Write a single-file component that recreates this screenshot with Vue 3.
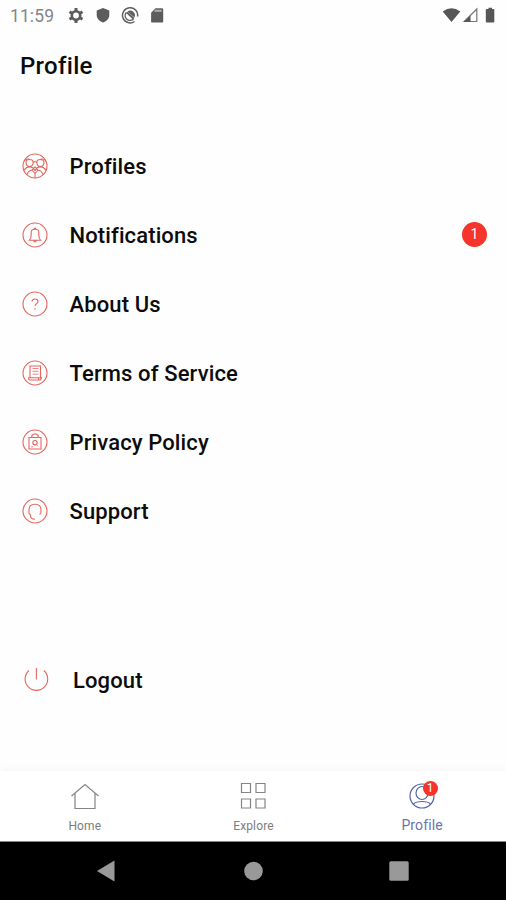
<script setup>
import { ref } from 'vue'

const items = [
    { id: 'profiles', label: 'Profiles' },
    { id: 'notifications', label: 'Notifications', badge: 1 },
    { id: 'about', label: 'About Us' },
    { id: 'terms', label: 'Terms of Service' },
    { id: 'privacy', label: 'Privacy Policy' },
    { id: 'support', label: 'Support' },
]
const tab = ref('profile')
</script>

<template>
    <div class="screen">
        <header class="status">
            <span class="time">11:59</span>
            <svg class="status-left" width="98" height="18" viewBox="0 0 98 18">
                <g fill="none" stroke="#5c5c5c">
                    <circle cx="9" cy="8.500" r="4.200" stroke-width="2.600" />
                    <path d="M9 1v3M9 13v3M2.500 4.800l2.600 1.500M12.900 10.700l2.600 1.500M2.500 12.200l2.600-1.500M12.900 6.300l2.600-1.500" stroke-width="3" />
                </g>
                <path d="M36 1l6.300 2.500v4.400c0 3.400-2.500 6.200-6.300 7.700-3.800-1.500-6.300-4.300-6.300-7.700V3.500z" fill="#5c5c5c" />
                <g fill="none" stroke="#606060" stroke-width="1.500">
                    <path d="M67.500 14.500A7.600 7.600 0 1 1 70.600 9.500" />
                    <path d="M59.500 5.300a4.800 4.800 0 1 0 7.300 6.200" stroke-width="1.300" />
                    <path d="M60.500 4.500a4.800 4.800 0 0 1 7 6z" fill="#606060" stroke="none" />
                    <path d="M60 5.500l6.500 6" stroke-width="2" />
                </g>
                <path d="M88.500 1.200H95q1.200 0 1.200 1.200v12q0 1.200-1.200 1.200H85.300q-1.200 0-1.200-1.200V5.700z" fill="#5c5c5c" />
                <path d="M87.500 3.800h7.200" stroke="#aaa" stroke-width="2.200" />
            </svg>
            <svg class="status-right" width="56" height="18" viewBox="0 0 56 18">
                <path d="M0.700 4.500Q9.500-2 18.300 4.500L9.500 15z" fill="#565656" />
                <path d="M34.800 2V14.500H22.300z" fill="#fff" stroke="#777" stroke-width="1.200" />
                <path d="M28.500 8.500v6.500h-7z" fill="#565656" />
                <path d="M46.500 2v-1.300h3.500v1.300h1.300q1 0 1 1V14.500q0 1-1 1h-6.500q-1 0-1-1V3q0-1 1-1z" fill="#565656" />
            </svg>
        </header>

        <h1>Profile</h1>

        <ul class="menu">
            <li v-for="item in items" :key="item.id">
                <svg class="icon" width="26" height="26" viewBox="0 0 26 26">
                    <circle cx="13" cy="13" r="12" />
                    <g v-if="item.id === 'profiles'">
                        <path d="M4 9.200q0-2.700 3.500-2.700t3.700 2.700q0 4.200-3.600 4.400Q4 13.400 4 9.200zM14.800 9.200q0-2.700 3.500-2.700T22 9.200q0 4.200-3.600 4.400-3.600-.2-3.600-4.400z" />
                        <path d="M1.800 8.500Q4 5 7.500 6.300M18.500 6.300Q22 5 24.200 8.500M11 9.500l2-1 2 1" />
                        <path d="M2 17.500q2-3.500 5.600-3.900Q11 14 13 17.500q2-3.500 5.400-3.900Q22 14 24 17.500M5 21.500q1.500-3.800 5-4.500l3 3.500 3-3.500q3.500.7 5 4.500M13 20.500V25M10 17l3-3 3 3" />
                    </g>
                    <g v-else-if="item.id === 'notifications'">
                        <path d="M7.300 18.300c1.400-1.200 1.900-2.800 1.900-5.300V10q0-2.800 3.800-2.800T16.800 10v3c0 2.500.5 4.100 1.900 5.300zM11.500 18.500q1.500 2.800 3 0M12 7q1-2 2 0" />
                    </g>
                    <g v-else-if="item.id === 'about'">
                        <path d="M10 10.600q.1-2.600 3-2.600 3 0 3 2.400 0 1.300-1.500 2.300-1.500.9-1.500 2.400M13 17v1.400" />
                    </g>
                    <g v-else-if="item.id === 'terms'">
                        <path d="M8 18V6h10.500v12.500" />
                        <path d="M6.500 17.800h10v2.200H7.800q-1.300 0-1.300-2.200zM16.500 20q3 .2 3-2.200h-3" />
                        <path d="M10.500 8.500h6M10.500 11.300h6M10.500 14.100h6" stroke-width=".8" />
                    </g>
                    <g v-else-if="item.id === 'privacy'">
                        <path d="M7 8.500h12v11.500H7zM9.800 8.500V7.300Q9.800 5 13 5t3.200 2.300v1.200" />
                        <circle cx="13" cy="13.700" r="2.200" />
                        <path d="M14.500 15.500l1.800 1.500M9 17.800h2" stroke-width=".7" />
                    </g>
                    <g v-else>
                        <path d="M8.500 16.500Q7 16.500 7 14.500V12Q7 6.300 13 6.300T19 12v2.500q0 1.800-1.600 1.800M8.500 16.500V18q0 3 4.500 3.200" />
                    </g>
                </svg>
                <span class="label">{{ item.label }}</span>
                <span v-if="item.badge" class="badge">{{ item.badge }}</span>
            </li>
        </ul>

        <div class="logout">
            <svg class="icon" width="26" height="26" viewBox="0 0 26 26">
                <path d="M6 3.500A11.300 11.300 0 1 0 20.800 3.500M13.400 1v11.500" />
            </svg>
            <span class="label">Logout</span>
        </div>

        <nav class="tabs">
            <button @click="tab = 'home'" :class="{ active: tab === 'home' }">
                <svg width="30" height="30" viewBox="0 0 30 30">
                    <path d="M1.500 14L15 2.500 28.500 14M5 11.500V26.500H25V11.500" />
                </svg>
                <span>Home</span>
            </button>
            <button @click="tab = 'explore'" :class="{ active: tab === 'explore' }">
                <svg width="30" height="30" viewBox="0 0 30 30">
                    <path d="M3.500 1.500h9v9h-9zM18 1.500h9v9H18zM3.500 17h9v9h-9zM18 17h9v9H18z" />
                </svg>
                <span>Explore</span>
            </button>
            <button @click="tab = 'profile'" :class="{ active: tab === 'profile' }">
                <svg width="30" height="30" viewBox="0 0 30 30">
                    <circle cx="15" cy="14" r="12" />
                    <ellipse cx="15" cy="11" rx="6" ry="6.500" />
                    <path d="M6.500 22Q9 19.500 15 19.500T23.500 22" />
                </svg>
                <i class="dot">1</i>
                <span>Profile</span>
            </button>
        </nav>

        <footer class="system">
            <svg width="20" height="24" viewBox="0 0 20 24"><path d="M1 12L18.500 1.500v21z" /></svg>
            <svg width="20" height="24" viewBox="0 0 20 24"><circle cx="10.500" cy="12" r="9.300" /></svg>
            <svg width="20" height="24" viewBox="0 0 20 24"><rect x=".3" y="2.300" width="19.400" height="19.400" rx="1.500" /></svg>
        </footer>
    </div>
</template>

<style>
body {
    margin: 0;
    background: #fff;
}
</style>

<style scoped>
.screen {
    display: flex;
    flex-direction: column;
    width: 506px;
    height: 900px;
    overflow: hidden;
    background: #fefefe;
    color: #0c0c0c;
    font-family: Roboto, "Liberation Sans", sans-serif;
}

.status {
    display: flex;
    align-items: center;
    height: 32px;
    padding: 0 8px 0 10px;
}

.time {
    width: 57px;
    font-size: 17.5px;
    letter-spacing: 0.1px;
    color: #858585;
}

.status-right {
    margin-left: auto;
}

h1 {
    margin: 18px 0 0 20px;
    font-size: 24px;
    line-height: 32px;
    font-weight: 500;
    letter-spacing: 0.3px;
}

.menu {
    margin: 49px 0 0;
    padding: 0;
    list-style: none;
}

.menu li,
.logout {
    display: flex;
    align-items: center;
    height: 69px;
    padding: 0 19px 0 22px;
}

.icon {
    fill: none;
    stroke: #e3675d;
    stroke-width: 1.1;
}

.label {
    margin-left: 21.5px;
    padding-top: 1px;
    font-size: 22px;
    font-weight: 500;
    letter-spacing: 0.12px;
}

.badge {
    width: 25px;
    height: 25px;
    margin-left: auto;
    border-radius: 50%;
    background: #f63429;
    color: #fff;
    font-size: 14px;
    line-height: 25px;
    text-align: center;
}

.logout {
    margin-top: 100px;
    padding-left: 23px;
}

.logout .label {
    margin-left: 24px;
}

.tabs {
    display: grid;
    grid-template-columns: repeat(3, 1fr);
    height: 71px;
    margin-top: auto;
    background: #fff;
    border-bottom: 1px solid #888;
    box-sizing: border-box;
    box-shadow: 0 -3px 8px rgba(0, 0, 0, 0.03);
}

.tabs button {
    position: relative;
    display: flex;
    flex-direction: column;
    align-items: center;
    padding: 11px 0 0 1px;
    border: 0;
    background: none;
    color: #7d7d7d;
    font-family: inherit;
    font-size: 12px;
    letter-spacing: 0.15px;
}

.tabs svg {
    fill: none;
    stroke: #858585;
    stroke-width: 1.2;
}

.tabs span {
    margin-top: 6px;
    line-height: 16px;
}

.tabs .active {
    color: #6975ab;
    font-size: 14px;
}

.tabs .active svg {
    stroke: #5365a5;
}

.tabs .active span {
    margin-top: 5px;
}

.dot {
    position: absolute;
    top: 10px;
    left: calc(50% + 1px);
    width: 15px;
    height: 15px;
    border-radius: 50%;
    background: #f63429;
    color: #fff;
    font-size: 12px;
    font-style: normal;
    line-height: 15px;
    text-align: center;
}

.system {
    display: flex;
    justify-content: space-between;
    align-items: center;
    height: 58px;
    padding: 0 97px 0 96px;
    background: #000;
    fill: #999;
}
</style>
